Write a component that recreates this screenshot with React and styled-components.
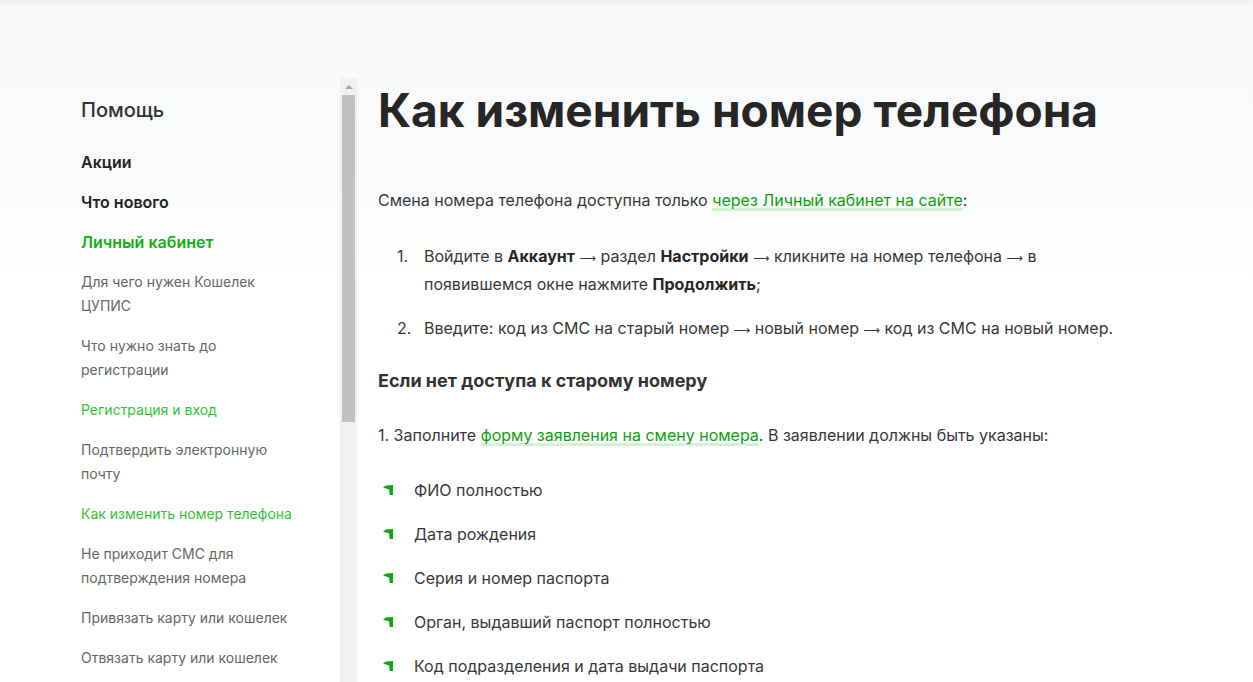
import React from "react";
import styled, { createGlobalStyle } from "styled-components";

const GlobalStyle = createGlobalStyle`
    html, body {
        margin: 0;
        padding: 0;
        overflow: hidden;
    }
    body {
        font-family: Inter, "Noto Sans", sans-serif;
        color: #333;
        background: #fff;
    }
`;

const Page = styled.div`
    position: relative;
    height: 682px;
    background: linear-gradient(180deg, #f7f8fa 0px, #f9fafb 160px, #fff 300px);
    display: flex;
    padding: 78px 0 0 81px;
    box-sizing: border-box;
    overflow: hidden;
    &::before {
        content: "";
        position: absolute;
        top: -10px;
        left: 0;
        right: 0;
        height: 10px;
        box-shadow: 0 0 8px rgba(0, 0, 0, 0.12);
    }
`;

const Sidebar = styled.aside`
    display: flex;
    height: calc(682px - 78px);
    flex-shrink: 0;
`;

const Nav = styled.nav`
    width: 220px;
    padding: 18px 39px 0 0;
    display: flex;
    flex-direction: column;
    gap: 16px;
`;

const NavTitle = styled.div`
    font-size: 20px;
    line-height: 28px;
    font-weight: 500;
    color: #333;
    margin-bottom: 10px;
`;

const NavItem = styled.a`
    display: block;
    font-size: ${p => (p.$top ? "16px" : "14px")};
    line-height: 24px;
    font-weight: ${p => (p.$top ? 600 : 400)};
    color: ${p => (p.$active ? (p.$top ? "#12b012" : "#2fc42f") : p.$top ? "#222" : "#666")};
    text-decoration: none;
`;

const Scrollbar = styled.div`
    width: 17px;
    background: #f1f1f1;
    display: flex;
    flex-direction: column;
    align-items: center;
`;

const ScrollArrow = styled.div`
    height: 17px;
    display: flex;
    align-items: center;
    justify-content: center;
    &::after {
        content: "";
        border-left: 4px solid transparent;
        border-right: 4px solid transparent;
        border-bottom: 4px solid #a3a3a3;
    }
`;

const ScrollThumb = styled.div`
    width: 13px;
    height: 327px;
    background: #c1c1c1;
`;

const Main = styled.main`
    width: 745px;
    margin-left: 21px;
    padding-top: 3px;
    flex-shrink: 0;
`;

const Title = styled.h1`
    margin: 0;
    font-size: 46px;
    line-height: 58px;
    font-weight: 700;
    color: #262626;
    white-space: nowrap;
`;

const Para = styled.p`
    margin: ${p => p.$mt || 0} 0 0;
    font-size: 16px;
    line-height: 28px;
    color: #383838;
`;

const Link = styled.a`
    color: #0ca20c;
    text-decoration: none;
    background: linear-gradient(#d6f0d6, #d6f0d6) no-repeat 0 100% / 100% 3px;
    padding-bottom: 1px;
`;

const Arr = styled.span`
    font-family: "DejaVu Sans", sans-serif;
    font-size: 11.5px;
    line-height: 1;
    font-weight: 400;
    color: #333;
`;

const Steps = styled.ol`
    list-style: none;
    margin: 28px 0 0;
    padding: 0;
    display: flex;
    flex-direction: column;
    gap: 16px;
`;

const Step = styled.li`
    display: flex;
    font-size: 16px;
    line-height: 28px;
    color: #383838;
    b {
        font-weight: 700;
        color: #262626;
    }
`;

const StepNum = styled.span`
    flex: 0 0 27px;
    padding-left: 19px;
`;

const SubTitle = styled.h3`
    margin: 26px 0 0;
    font-size: 18px;
    line-height: 26px;
    font-weight: 700;
    color: #333;
`;

const Bullets = styled.ul`
    list-style: none;
    margin: 27px 0 0;
    padding: 0;
    display: flex;
    flex-direction: column;
    gap: 16px;
`;

const Bullet = styled.li`
    display: flex;
    align-items: center;
    font-size: 16px;
    line-height: 28px;
    color: #383838;
`;

const BulletIcon = styled.span`
    flex: 0 0 36px;
    display: flex;
    padding-left: 5px;
    box-sizing: border-box;
`;

const Arrow = () => (
    <svg width="10" height="10" viewBox="0 0 10 10">
        <path d="M0 2.6 L2.8 0.6 L10 0 L10 10 L6.6 10 L6.2 4.6 Z" fill="#0fa80f" />
    </svg>
);

const menu = [
    { text: "Акции", top: true },
    { text: "Что нового", top: true },
    { text: "Личный кабинет", top: true, active: true },
    { text: "Для чего нужен Кошелек ЦУПИС" },
    { text: "Что нужно знать до регистрации" },
    { text: "Регистрация и вход", active: true },
    { text: "Подтвердить электронную почту" },
    { text: "Как изменить номер телефона", active: true },
    { text: "Не приходит СМС для подтверждения номера" },
    { text: "Привязать карту или кошелек" },
    { text: "Отвязать карту или кошелек" },
    { text: "Безопасность" },
];

const fields = [
    "ФИО полностью",
    "Дата рождения",
    "Серия и номер паспорта",
    "Орган, выдавший паспорт полностью",
    "Код подразделения и дата выдачи паспорта",
    "Старый и новый номер телефона",
];

const A = () => <Arr>⟶</Arr>;

export default function App() {
    return (
        <>
            <GlobalStyle />
            <Page>
                <Sidebar>
                    <Nav>
                        <NavTitle>Помощь</NavTitle>
                        {menu.map(m => (
                            <NavItem key={m.text} href="#" $top={m.top} $active={m.active}>
                                {m.text}
                            </NavItem>
                        ))}
                    </Nav>
                    <Scrollbar>
                        <ScrollArrow />
                        <ScrollThumb />
                    </Scrollbar>
                </Sidebar>
                <Main>
                    <Title>Как изменить номер телефона</Title>
                    <Para $mt="47px">
                        Смена номера телефона доступна только <Link href="#">через Личный кабинет на сайте</Link>:
                    </Para>
                    <Steps>
                        <Step>
                            <StepNum>1.</StepNum>
                            <span>
                                Войдите в <b>Аккаунт</b> <A /> раздел <b>Настройки</b> <A /> кликните на номер телефона <A /> в
                                появившемся окне нажмите <b>Продолжить</b>;
                            </span>
                        </Step>
                        <Step>
                            <StepNum>2.</StepNum>
                            <span>
                                Введите: код из СМС на старый номер <A /> новый номер <A /> код из СМС на новый номер.
                            </span>
                        </Step>
                    </Steps>
                    <SubTitle>Если нет доступа к старому номеру</SubTitle>
                    <Para $mt="27px">
                        1. Заполните <Link href="#">форму заявления на смену номера</Link>. В заявлении должны быть указаны:
                    </Para>
                    <Bullets>
                        {fields.map(f => (
                            <Bullet key={f}>
                                <BulletIcon>
                                    <Arrow />
                                </BulletIcon>
                                {f}
                            </Bullet>
                        ))}
                    </Bullets>
                </Main>
            </Page>
        </>
    );
}
